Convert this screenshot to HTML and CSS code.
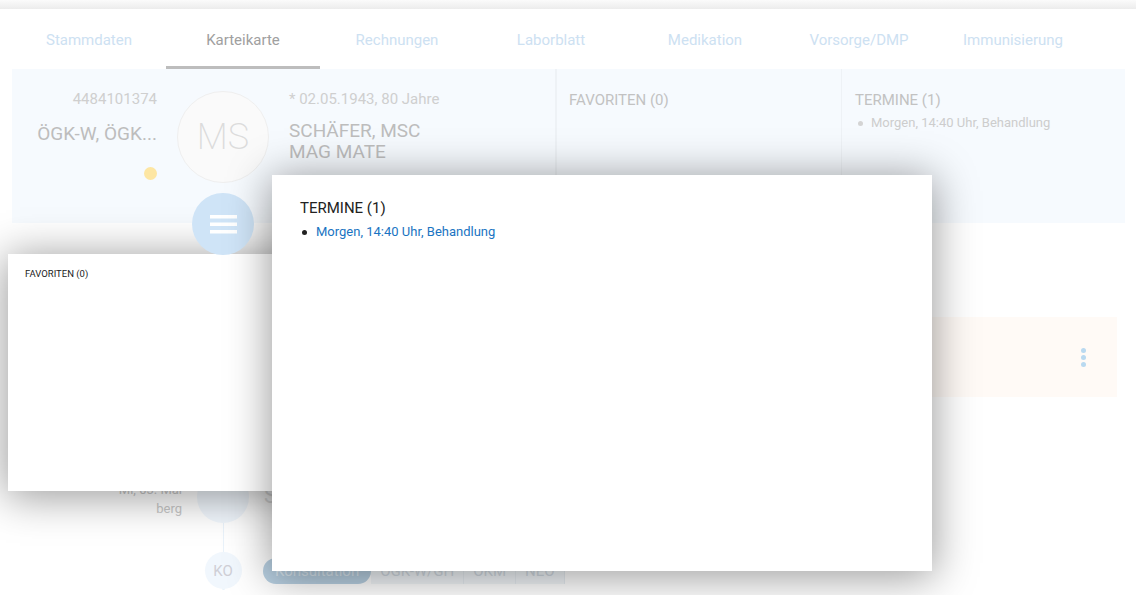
FILE: index.html
```html
<!DOCTYPE html>
<html lang="de">
<head>
    <meta charset="UTF-8">
    <title>Karteikarte</title>
    <link rel="stylesheet" href="styles.css">
</head>
<body>
    <div class="topbar"></div>

    <nav class="tabs">
        <a class="tab">Stammdaten</a>
        <a class="tab active">Karteikarte</a>
        <a class="tab">Rechnungen</a>
        <a class="tab">Laborblatt</a>
        <a class="tab">Medikation</a>
        <a class="tab">Vorsorge/DMP</a>
        <a class="tab">Immunisierung</a>
    </nav>

    <section class="patient">
        <div class="p-main">
            <div class="p-ids">
                <div class="p-num">4484101374</div>
                <div class="p-ins">ÖGK-W, ÖGK...</div>
                <span class="dot"></span>
            </div>
            <div class="p-avatar">
                <div class="avatar">MS</div>
                <button class="menu-btn">
                    <svg width="27" height="19" viewBox="0 0 27 19">
                        <rect x="0" y="0" width="27" height="3.5" fill="#fff"/>
                        <rect x="0" y="7.5" width="27" height="3.5" fill="#fff"/>
                        <rect x="0" y="15" width="27" height="3.5" fill="#fff"/>
                    </svg>
                </button>
            </div>
            <div class="p-info">
                <div class="p-birth">* 02.05.1943, 80 Jahre</div>
                <div class="p-name">SCHÄFER, MSC<br>MAG MATE</div>
            </div>
        </div>
        <div class="p-box fav">
            <div class="box-title">FAVORITEN (0)</div>
        </div>
        <div class="p-box">
            <div class="box-title">TERMINE (1)</div>
            <ul class="box-list">
                <li>Morgen, 14:40 Uhr, Behandlung</li>
            </ul>
        </div>
    </section>

    <main class="content">
        <div class="entry-card">
            <span class="kebab"><i></i><i></i><i></i></span>
        </div>

        <div class="timeline">
            <div class="tl-row">
                <div class="tl-date">Mi, 03. Mai<br>berg</div>
                <div class="tl-col"><div class="tl-node big"></div></div>
                <div class="tl-title">SCHÄFER</div>
            </div>
            <div class="tl-row">
                <div class="tl-date"></div>
                <div class="tl-col"><div class="tl-line"></div></div>
            </div>
            <div class="tl-row">
                <div class="tl-date"></div>
                <div class="tl-col"><div class="tl-node small">KO</div></div>
                <div class="chips">
                    <span class="chip main">Konsultation</span>
                    <span class="chip">ÖGK-W/GH</span>
                    <span class="chip">OKM</span>
                    <span class="chip">NEO</span>
                </div>
            </div>
        </div>
    </main>

    <div class="popup popup-fav">
        <div class="popup-small-title">FAVORITEN (0)</div>
    </div>

    <div class="popup popup-termine">
        <div class="popup-title">TERMINE (1)</div>
        <ul class="popup-list">
            <li>Morgen, 14:40 Uhr, Behandlung</li>
        </ul>
    </div>
</body>
</html>
```

FILE: styles.css
```css
body {
    margin: 0;
    font-family: Roboto, 'Liberation Sans', sans-serif;
    background: #fff;
    width: 1136px;
    height: 595px;
    overflow: hidden;
    position: relative;
}

.topbar {
    height: 9px;
    background: linear-gradient(#fbfbfb, #ececec);
}

/* tabs */
.tabs {
    display: flex;
    height: 60px;
    padding-left: 12px;
}

.tab {
    width: 154px;
    box-sizing: border-box;
    padding-top: 22px;
    text-align: center;
    font-size: 15px;
    line-height: 18px;
    color: #cde1f2;
    border-bottom: 3px solid transparent;
}

.tab.active {
    color: #a0a0a0;
    border-bottom-color: #bdbdbd;
}

/* patient header */
.patient {
    display: flex;
    margin: 0 11px 0 12px;
    height: 154px;
    background: #f6fafe;
}

.p-main {
    display: flex;
    width: 540px;
}

.p-ids {
    width: 145px;
    text-align: right;
    padding-top: 21px;
}

.p-num {
    font-size: 15px;
    line-height: 18px;
    color: #cfcfcf;
}

.p-ins {
    margin-top: 15px;
    font-size: 19px;
    line-height: 22px;
    color: #bdbdbd;
}

.dot {
    display: block;
    width: 13px;
    height: 13px;
    border-radius: 50%;
    background: #fde6a3;
    margin: 22px 0 0 auto;
}

.p-avatar {
    width: 92px;
    margin-left: 20px;
    padding-top: 22px;
    display: flex;
    flex-direction: column;
    align-items: center;
}

.avatar {
    flex-shrink: 0;
    width: 90px;
    height: 90px;
    border-radius: 50%;
    border: 1px solid #efefef;
    background: #fafafa;
    display: flex;
    align-items: center;
    justify-content: center;
    font-size: 36px;
    font-weight: 200;
    color: #dcdcdc;
}

.menu-btn {
    flex-shrink: 0;
    margin-top: 10px;
    width: 62px;
    height: 62px;
    border-radius: 50%;
    border: none;
    background: #cfe4f7;
    display: flex;
    align-items: center;
    justify-content: center;
    padding: 0;
    position: relative;
    z-index: 1;
}

.p-info {
    margin-left: 20px;
    padding-top: 21px;
}

.p-birth {
    font-size: 15px;
    line-height: 18px;
    color: #cfcfcf;
}

.p-name {
    margin-top: 12px;
    font-size: 19px;
    line-height: 21px;
    color: #bdbdbd;
}

.p-box {
    border-left: 1px solid #eef2f6;
    padding: 22px 14px 0 13px;
}

.p-box.fav {
    width: 258px;
    margin-left: 3px;
    box-shadow: inset 1px 0 0 #eef2f6;
}

.p-box + .p-box:last-child {
    flex: 1;
}

.box-title {
    font-size: 15px;
    line-height: 18px;
    color: #c2c2c2;
}

.box-list {
    list-style: none;
    margin: 6px 0 0;
    padding: 0;
}

.box-list li {
    position: relative;
    padding-left: 16px;
    font-size: 13px;
    line-height: 16px;
    color: #cdcdcd;
}

.box-list li::before {
    content: "";
    position: absolute;
    left: 3px;
    top: 6px;
    width: 5px;
    height: 5px;
    border-radius: 50%;
    background: #d4d4d4;
}

/* lower content */
.entry-card {
    margin: 94px 19px 0 560px;
    height: 80px;
    background: #fffaf6;
    display: flex;
    justify-content: flex-end;
    align-items: center;
    padding-right: 31px;
}

.kebab {
    display: flex;
    flex-direction: column;
    gap: 2px;
}

.kebab i {
    width: 5px;
    height: 5px;
    border-radius: 50%;
    background: #b9d9f0;
}

.timeline {
    margin-top: 74px;
    padding-left: 12px;
}

.tl-row {
    display: flex;
}

.tl-date {
    width: 170px;
    padding-top: 9px;
    text-align: right;
    font-size: 13px;
    line-height: 19px;
    color: #c8c8c8;
}

.tl-col {
    width: 82px;
    display: flex;
    justify-content: center;
}

.tl-node {
    border-radius: 50%;
    background: #f1f7fd;
    display: flex;
    align-items: center;
    justify-content: center;
}

.tl-node.big {
    width: 52px;
    height: 52px;
}

.tl-node.small {
    width: 37px;
    height: 37px;
    font-size: 15px;
    color: #cfcfd6;
    box-shadow: 0 18px 0 -17px #eaf3fb;
}

.tl-line {
    width: 1px;
    height: 29px;
    background: #eaf3fb;
}

.tl-title {
    padding-top: 12px;
    font-size: 22px;
    color: #e2e2e2;
}

.chips {
    display: flex;
    align-items: center;
    margin-left: -1px;
}

.chip {
    height: 26px;
    line-height: 26px;
    padding: 0 9px;
    font-size: 15px;
    color: #d3dce4;
    background: #f3f7fa;
    border-right: 1px solid #e8eef3;
}

.chip.main {
    padding: 0 12px;
    border-radius: 13px;
    background: #b9d1e3;
    color: #dce8f1;
    border: none;
}

/* popups */
.popup {
    position: absolute;
    background: #fff;
    box-shadow: 0 4px 40px 2px rgba(0, 0, 0, 0.4);
}

.popup-fav {
    left: 8px;
    top: 254px;
    width: 400px;
    height: 237px;
}

.popup-small-title {
    padding: 14px 0 0 17px;
    font-size: 9.5px;
    line-height: 12px;
    color: #222;
}

.popup-termine {
    left: 272px;
    top: 175px;
    width: 660px;
    height: 396px;
    z-index: 2;
}

.popup-title {
    padding: 24px 0 0 28px;
    font-size: 15px;
    line-height: 18px;
    color: #222;
}

.popup-list {
    list-style: none;
    margin: 7px 0 0 28px;
    padding: 0;
}

.popup-list li {
    position: relative;
    padding-left: 16px;
    font-size: 13px;
    line-height: 16px;
    color: #1a74c2;
}

.popup-list li::before {
    content: "";
    position: absolute;
    left: 2px;
    top: 6px;
    width: 5px;
    height: 5px;
    border-radius: 50%;
    background: #222;
}
```
